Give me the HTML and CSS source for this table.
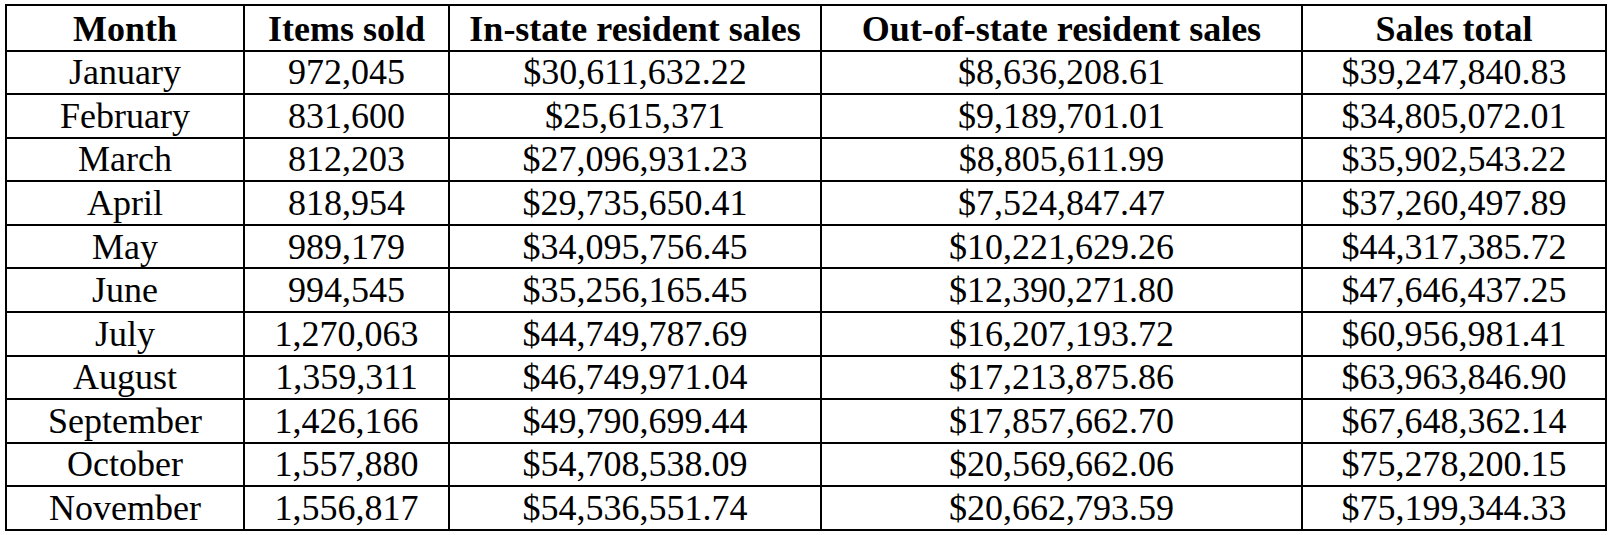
FILE: index.html
```html
<!DOCTYPE html>
<html>
<head>
<meta charset="utf-8">
<link rel="stylesheet" href="styles.css">
</head>
<body>
<table class="sales">
  <colgroup>
    <col class="c-month">
    <col class="c-items">
    <col class="c-in">
    <col class="c-out">
    <col class="c-total">
  </colgroup>
  <thead>
    <tr><th>Month</th><th>Items sold</th><th>In-state resident sales</th><th>Out-of-state resident sales</th><th>Sales total</th></tr>
  </thead>
  <tbody>
    <tr><td>January</td><td>972,045</td><td>$30,611,632.22</td><td>$8,636,208.61</td><td>$39,247,840.83</td></tr>
    <tr><td>February</td><td>831,600</td><td>$25,615,371</td><td>$9,189,701.01</td><td>$34,805,072.01</td></tr>
    <tr><td>March</td><td>812,203</td><td>$27,096,931.23</td><td>$8,805,611.99</td><td>$35,902,543.22</td></tr>
    <tr><td>April</td><td>818,954</td><td>$29,735,650.41</td><td>$7,524,847.47</td><td>$37,260,497.89</td></tr>
    <tr><td>May</td><td>989,179</td><td>$34,095,756.45</td><td>$10,221,629.26</td><td>$44,317,385.72</td></tr>
    <tr><td>June</td><td>994,545</td><td>$35,256,165.45</td><td>$12,390,271.80</td><td>$47,646,437.25</td></tr>
    <tr><td>July</td><td>1,270,063</td><td>$44,749,787.69</td><td>$16,207,193.72</td><td>$60,956,981.41</td></tr>
    <tr><td>August</td><td>1,359,311</td><td>$46,749,971.04</td><td>$17,213,875.86</td><td>$63,963,846.90</td></tr>
    <tr><td>September</td><td>1,426,166</td><td>$49,790,699.44</td><td>$17,857,662.70</td><td>$67,648,362.14</td></tr>
    <tr><td>October</td><td>1,557,880</td><td>$54,708,538.09</td><td>$20,569,662.06</td><td>$75,278,200.15</td></tr>
    <tr><td>November</td><td>1,556,817</td><td>$54,536,551.74</td><td>$20,662,793.59</td><td>$75,199,344.33</td></tr>
  </tbody>
</table>
</body>
</html>
```
FILE: styles.css
```css
html, body {
  margin: 0;
  background: #ffffff;
}
body {
  padding: 4px 0 0 5px;
  font-family: "Liberation Serif", "Times New Roman", serif;
  color: #000000;
}
.sales {
  border-collapse: collapse;
  table-layout: fixed;
  width: 1600px;
}
.c-month { width: 238px; }
.c-items { width: 205px; }
.c-in { width: 372px; }
.c-out { width: 481px; }
.c-total { width: 304px; }
.sales th,
.sales td {
  border: 2px solid #000000;
  padding: 0;
  text-align: center;
  vertical-align: middle;
  font-size: 36px;
  line-height: 1;
  white-space: nowrap;
}
.sales th {
  font-weight: bold;
  height: 41.5px;
  padding-top: 2px;
}
.sales td {
  font-weight: normal;
  height: 41.58px;
}
```
